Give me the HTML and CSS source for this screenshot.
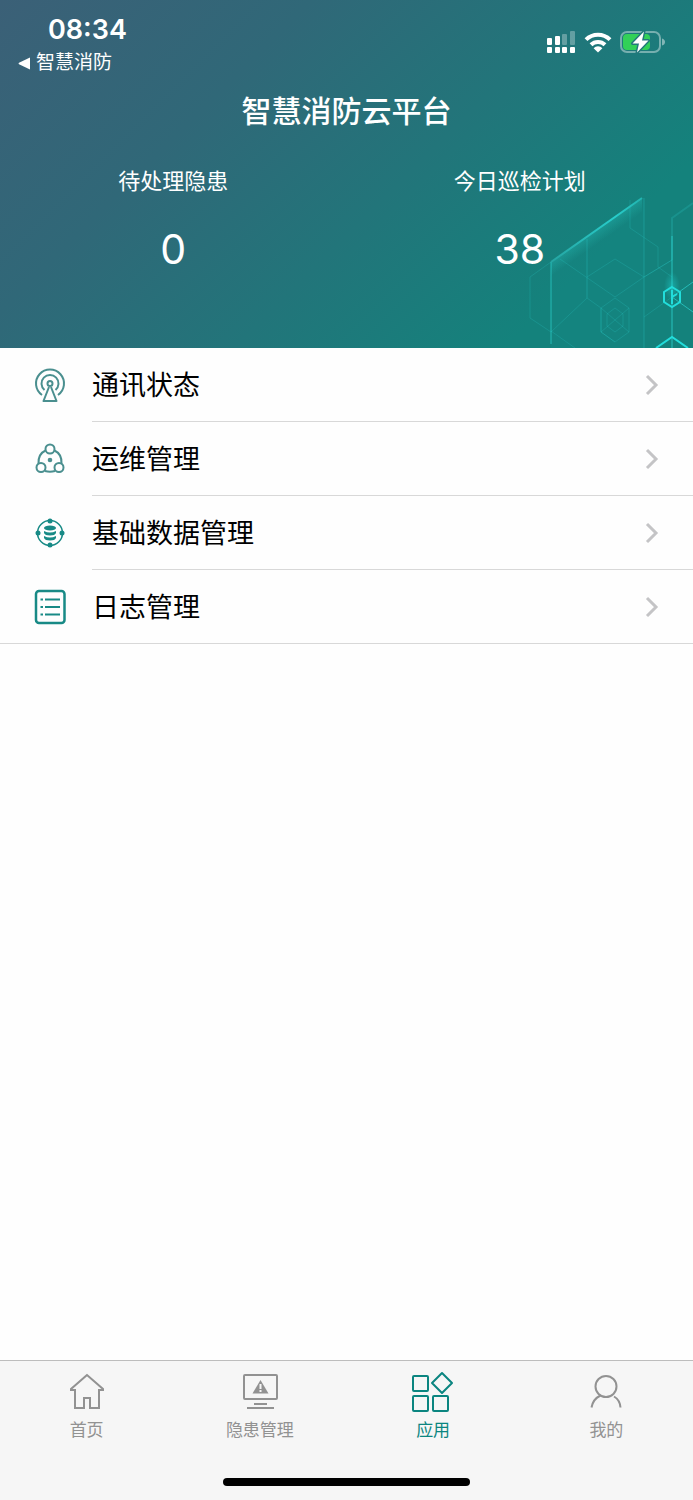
FILE: index.html
```
<!DOCTYPE html>
<html lang="zh-CN">
<head>
    <meta charset="UTF-8">
    <meta name="viewport" content="width=device-width, initial-scale=1.0">
    <title>智慧消防云平台</title>
    <link rel="stylesheet" href="styles.css">
</head>
<body>
    <header class="header">
        <svg class="header-pattern" width="193" height="168" viewBox="0 0 193 168" fill="none" stroke="#2bd3d0" aria-hidden="true">
            <defs>
                <linearGradient id="beam" x1="51" y1="81" x2="142" y2="18" gradientUnits="userSpaceOnUse">
                    <stop offset="0" stop-color="#25a5a2"/>
                    <stop offset="0.7" stop-color="#28cdcb"/>
                    <stop offset="1" stop-color="#22b3af"/>
                </linearGradient>
                <linearGradient id="glow" x1="96" y1="50" x2="103" y2="60" gradientUnits="userSpaceOnUse">
                    <stop offset="0" stop-color="#2bd3d0" stop-opacity="0.25"/>
                    <stop offset="1" stop-color="#2bd3d0" stop-opacity="0"/>
                </linearGradient>
                <radialGradient id="spot">
                    <stop offset="0" stop-color="#20e0de" stop-opacity="0.4"/>
                    <stop offset="1" stop-color="#20e0de" stop-opacity="0"/>
                </radialGradient>
            </defs>
            <path d="M51 82 142 18v30L51 110z" fill="url(#glow)" stroke="none"/>
            <path d="M51 82 142 18h2v150H51z" fill="#2bd3d0" fill-opacity="0.03" stroke="none"/>
            <g stroke-opacity="0.2">
                <path d="M51 82 30 97v41l21 14 36-34 14 10v24l14 10M60 79l55 38 29-20 28-17M87 97l28-18 29 18 28-17M130 20v28l28 19v20l14 10"/>
                <path d="M115 118l14 10v24l-14 10-14-10v-24zM115 128l8 6v12l-8 6-8-6v-12zM101 128l28 24M129 128l-28 24M144 137l28-20M51 151l24 17"/>
            </g>
            <path d="M87 59v59M144 18v150" stroke-opacity="0.15" stroke-width="2"/>
            <path d="M172 80V38l21-15" stroke-opacity="0.2" stroke-width="2"/>
            <path d="M51 82v82" stroke-opacity="0.35" stroke-width="2"/>
            <path d="M51 82 142 18" stroke="url(#beam)" stroke-width="2"/>
            <path d="M172 56v112" stroke-opacity="0.4" stroke-width="2"/>
            <ellipse cx="172" cy="106" rx="8" ry="14" fill="url(#spot)" stroke="none"/>
            <path d="M172 117 193 102M172 117l21 15" stroke-opacity="0.7"/>
            <path d="M172 107l8 5v10l-8 5-8-5v-10zM172 110v14M172 117l5-3" stroke="#22dddb" stroke-width="2"/>
            <path d="M156 168l16-11 16 11" stroke="#22dddb" stroke-width="2"/>
        </svg>

        <div class="status-bar">
            <div class="status-left">
                <time class="clock">08:34</time>
                <a class="back-app" href="#">
                    <svg width="13" height="13" viewBox="0 0 13 13" fill="#fff" aria-hidden="true"><path d="M12 0.5v12L1 7.2Q0 6.5 1 5.8z"/></svg>
                    智慧消防
                </a>
            </div>
            <div class="status-icons">
                <svg width="29" height="23" viewBox="0 0 29 23" fill="#fff" aria-hidden="true">
                    <rect x="0" y="7" width="5" height="7" rx="1"/>
                    <rect x="8" y="5" width="5" height="9" rx="1"/>
                    <rect x="15" y="3" width="5" height="11" rx="1" opacity="0.3"/>
                    <rect x="23" y="0" width="5" height="14" rx="1" opacity="0.3"/>
                    <rect x="0" y="16" width="5" height="6" rx="1"/>
                    <rect x="8" y="16" width="5" height="6" rx="1"/>
                    <rect x="15" y="16" width="5" height="6" rx="1"/>
                    <rect x="23" y="16" width="5" height="6" rx="1"/>
                </svg>
                <svg width="28" height="21" viewBox="0 0 28 21" fill="none" stroke="#fff" stroke-width="4" aria-hidden="true">
                    <path d="M2 7.6a17 17 0 0 1 24 0"/>
                    <path d="M7 12.8a10 10 0 0 1 14 0"/>
                    <path d="M14 20.6l-4.4-4.4a6.2 6.2 0 0 1 8.8 0z" fill="#fff" stroke="none"/>
                </svg>
                <svg width="45" height="23" viewBox="0 0 45 23" aria-hidden="true">
                    <rect x="1" y="1" width="39" height="20" rx="6" fill="none" stroke="#fff" stroke-opacity="0.4" stroke-width="2"/>
                    <path d="M42 7.5q3 1 3 3.500t-3 3.500z" fill="#fff" fill-opacity="0.45"/>
                    <rect x="3" y="3" width="27" height="16" rx="4" fill="#32d058"/>
                    <path d="M24 0.500 12.500 12.500h6.500L17 21.500 28.500 9.500H22z" fill="#fff" stroke="#23787b" stroke-width="3" paint-order="stroke" stroke-linejoin="round"/>
                </svg>
            </div>
        </div>

        <h1>智慧消防云平台</h1>

        <dl class="stats">
            <div class="stat">
                <dt>待处理隐患</dt>
                <dd>0</dd>
            </div>
            <div class="stat">
                <dt>今日巡检计划</dt>
                <dd>38</dd>
            </div>
        </dl>
    </header>

    <main>
        <ul class="menu">
            <li>
                <a href="#">
                    <svg class="menu-icon" viewBox="0 0 34 36" fill="none" stroke="#4a8f8f" stroke-width="2" aria-hidden="true">
                        <path d="M9 28a14 14 0 1 1 16 0"/>
                        <path d="M11.500 23a8.500 8.500 0 1 1 11 0"/>
                        <circle cx="17" cy="16.500" r="2.500"/>
                        <path d="M16 20 10.500 34h13L18 20" stroke-linejoin="round"/>
                    </svg>
                    <span>通讯状态</span>
                    <svg class="arrow" viewBox="0 0 14 22" aria-hidden="true"><path d="M2 2l9 9-9 9"/></svg>
                </a>
            </li>
            <li>
                <a href="#">
                    <svg class="menu-icon" viewBox="0 0 34 36" fill="none" stroke="#4a8f8f" stroke-width="2" aria-hidden="true">
                        <circle cx="17" cy="8" r="4.500"/>
                        <circle cx="8" cy="26.500" r="4.500"/>
                        <circle cx="26" cy="26.500" r="4.500"/>
                        <circle cx="17" cy="19" r="2.300" fill="#4a8f8f" stroke="none"/>
                        <path d="M12.500 9.500Q5 13 5.500 22.500M21.500 9.500Q29 13 28.500 22.500M12 30q5 1.500 10 0"/>
                    </svg>
                    <span>运维管理</span>
                    <svg class="arrow" viewBox="0 0 14 22" aria-hidden="true"><path d="M2 2l9 9-9 9"/></svg>
                </a>
            </li>
            <li>
                <a href="#">
                    <svg class="menu-icon" viewBox="0 0 34 36" fill="#188a86" aria-hidden="true">
                        <circle cx="17" cy="18" r="12.500" fill="none" stroke="#188a86" stroke-width="1.500"/>
                        <circle cx="17" cy="6" r="2.500"/>
                        <circle cx="17" cy="30" r="2.500"/>
                        <circle cx="5" cy="18" r="2.500"/>
                        <circle cx="29" cy="18" r="2.500"/>
                        <ellipse cx="17" cy="13" rx="6" ry="2.500"/>
                        <path d="M11 16q6 3 12 0v2q-1 2.500-6 2.500T11 18zM11 21q6 3 12 0v2q-1 2.500-6 2.500T11 23z"/>
                    </svg>
                    <span>基础数据管理</span>
                    <svg class="arrow" viewBox="0 0 14 22" aria-hidden="true"><path d="M2 2l9 9-9 9"/></svg>
                </a>
            </li>
            <li>
                <a href="#">
                    <svg class="menu-icon" viewBox="0 0 34 36" fill="none" stroke="#188a86" stroke-width="2.500" aria-hidden="true">
                        <rect x="3" y="2" width="28.500" height="32" rx="3"/>
                        <path d="M12 10.500h15M12 18h15M12 25.500h15M7.500 10.500H10M7.500 18H10M7.500 25.500H10" stroke-width="2"/>
                    </svg>
                    <span>日志管理</span>
                    <svg class="arrow" viewBox="0 0 14 22" aria-hidden="true"><path d="M2 2l9 9-9 9"/></svg>
                </a>
            </li>
        </ul>
    </main>

    <footer class="footer">
        <nav class="tabs">
            <a class="tab" href="#">
                <svg viewBox="0 0 42 42" aria-hidden="true">
                    <path d="M21 5 5 19v1h4v18h9V28h6v10h9V20h4v-1z"/>
                </svg>
                首页
            </a>
            <a class="tab" href="#">
                <svg viewBox="0 0 42 42" aria-hidden="true">
                    <rect x="5" y="5" width="33" height="24" rx="1"/>
                    <path d="M15 34h13M8 38h27"/>
                    <path d="M21.500 10 13.500 23.500h16z" fill="currentColor" stroke="none"/>
                    <path d="M21.500 14v5M21.500 20v2" stroke="#f6f6f6"/>
                </svg>
                隐患管理
            </a>
            <a class="tab active" href="#" aria-current="page">
                <svg viewBox="0 0 42 42" aria-hidden="true">
                    <rect x="1" y="6" width="15" height="15" rx="1"/>
                    <rect x="1" y="26" width="15" height="15" rx="1"/>
                    <rect x="21" y="26" width="15" height="15" rx="1"/>
                    <path d="M30 3l10 10-10 10-10-10z" stroke-linejoin="round"/>
                </svg>
                应用
            </a>
            <a class="tab" href="#">
                <svg viewBox="0 0 42 42" aria-hidden="true">
                    <circle cx="21" cy="16.500" r="10.500"/>
                    <path d="M6.500 37.500Q8 29 15.500 25.500M29 26.500Q35 30 35.500 37.500"/>
                </svg>
                我的
            </a>
        </nav>
        <div class="home-bar"></div>
    </footer>
</body>
</html>
```
FILE: styles.css
```
* {
    box-sizing: border-box;
}

body {
    font-family: Inter, "Noto Sans CJK SC", sans-serif;
    background-color: #fefefe;
    display: flex;
    flex-direction: column;
    min-height: 100vh;
    margin: 0;
}

a {
    color: inherit;
    text-decoration: none;
}

.header {
    position: relative;
    min-height: 348px;
    background: linear-gradient(135deg, #3b6077 0%, #306878 30%, #14827c 82%);
    color: #fff;
}

.header-pattern {
    position: absolute;
    right: 0;
    bottom: 0;
}

.status-bar {
    display: flex;
    justify-content: space-between;
    padding: 14px 28px 0 18px;
}

.clock {
    display: block;
    padding-left: 30px;
    font-size: 27px;
    font-weight: 600;
    line-height: 32px;
}

.back-app {
    display: flex;
    align-items: center;
    gap: 5px;
    font-size: 19px;
    font-weight: 400;
    line-height: 34px;
}

.status-icons {
    display: flex;
    align-items: center;
    gap: 8px;
    height: 56px;
}

h1 {
    margin: 11px 0 0;
    font-size: 30px;
    font-weight: 500;
    line-height: 40px;
    text-align: center;
}

.stats {
    display: flex;
    margin: 34px 0 0;
    text-align: center;
}

.stat {
    flex: 1;
}

.stat dt {
    font-size: 22px;
    font-weight: 400;
    line-height: 32px;
}

.stat dd {
    margin: 28px 0 0;
    font-size: 41px;
    font-weight: 400;
    line-height: 48px;
}

main {
    flex: 1;
}

.menu {
    margin: 0;
    padding: 0;
    list-style: none;
    border-bottom: 1px solid #d8d8d8;
}

.menu a {
    display: flex;
    align-items: center;
    padding-left: 33px;
}

.menu-icon {
    width: 34px;
    height: 36px;
    margin-right: 25px;
}

.menu span {
    flex: 1;
    padding-top: 2px;
    font-size: 27px;
    font-weight: 400;
    line-height: 71px;
    color: #000;
}

.arrow {
    width: 14px;
    height: 22px;
    margin-right: 34px;
    fill: none;
    stroke: #c4c4c6;
    stroke-width: 3;
}

.menu li + li {
    background: linear-gradient(#d8d8d8, #d8d8d8) 92px 0 / 100% 1px no-repeat;
    padding-top: 1px;
}

.footer {
    height: 140px;
    background-color: #f6f6f6;
    border-top: 1px solid #bdbdbd;
}

.tabs {
    display: flex;
    padding-top: 9px;
}

.tab {
    flex: 1;
    display: flex;
    flex-direction: column;
    align-items: center;
    gap: 6px;
    font-size: 17px;
    line-height: 24px;
    color: #929292;
}

.tab svg {
    width: 42px;
    height: 42px;
    fill: none;
    stroke: currentColor;
    stroke-width: 2;
}

.tab.active {
    color: #0b8580;
}

.home-bar {
    width: 247px;
    height: 8px;
    margin: 36px auto 0;
    border-radius: 4px;
    background-color: #000;
}
```
